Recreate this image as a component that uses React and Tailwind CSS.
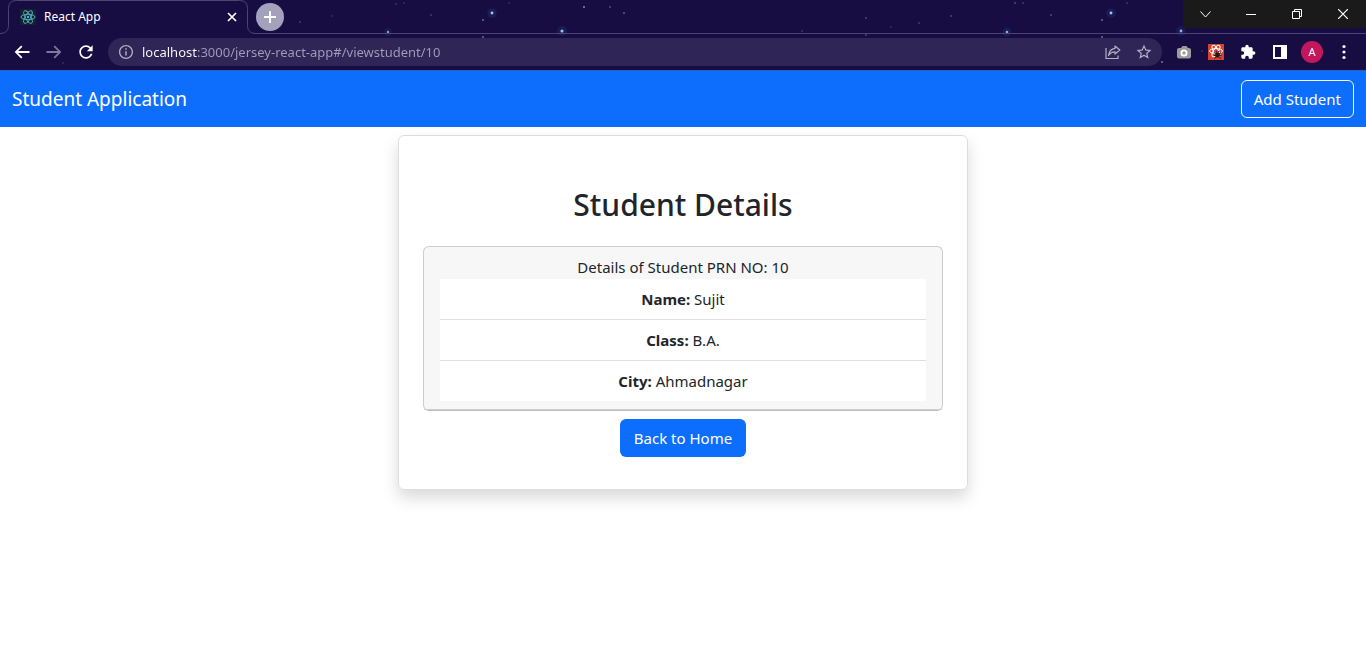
import React from "react";

const STARS = [
  [388, 32, 1.3, 0.8], [492, 13, 1.6, 1], [483, 20, 1, 0.6], [483, 37, 1, 0.6],
  [562, 31, 1.7, 1], [584, 7, 1.1, 0.7], [610, 7, 1, 0.4], [624, 13, 1, 0.5],
  [396, 4, 1, 0.25], [404, 3, 1, 0.2], [332, 16, 1, 0.2], [431, 15, 1, 0.3],
  [300, 22, 1, 0.3], [509, 3, 1, 0.2], [802, 31, 1, 0.25], [866, 18, 1, 0.35],
  [866, 35, 1, 0.35], [891, 27, 1, 0.2], [919, 23, 1, 0.3], [951, 16, 1, 0.35],
  [1007, 32, 1.5, 0.9], [1015, 3, 1, 0.4], [1023, 3, 1, 0.3], [1051, 15, 1, 0.4],
  [1111, 13, 1.6, 1], [1102, 20, 1, 0.6], [1102, 37, 1, 0.6], [1127, 3, 1, 0.25],
  [1181, 31, 1.6, 0.9], [1162, 62, 1.1, 0.6], [63, 63, 1, 0.2], [1202, 51, 1, 0.2],
];

function Icon({ d, className }) {
  return (
    <svg viewBox="0 0 24 24" className={className} fill="currentColor" aria-hidden="true">
      <path d={d} fillRule="evenodd" />
    </svg>
  );
}

const BACK = "M21 10.900H7.300l5.200-5.200L11 4.200l-7.800 7.800 7.800 7.800 1.500-1.500-5.200-5.200H21z";
const FORWARD = "M3 10.900h13.700l-5.200-5.200L13 4.200l7.800 7.800-7.800 7.800-1.500-1.500 5.200-5.200H3z";
const RELOAD =
  "M17.65 6.35C16.2 4.9 14.21 4 12 4c-4.42 0-7.99 3.58-7.99 8s3.57 8 7.99 8c3.73 0 6.84-2.55 7.73-6h-2.08c-.82 2.33-3.04 4-5.65 4-3.31 0-6-2.69-6-6s2.69-6 6-6c1.66 0 3.14.69 4.22 1.78L13 11h7V4l-2.35 2.35z";
const INFO =
  "M10.900 6.500h2.200v2.200h-2.200zm0 4.200h2.200v6.600h-2.200zM12 1.500C6.200 1.500 1.500 6.200 1.500 12S6.200 22.500 12 22.500 22.500 17.800 22.500 12 17.800 1.500 12 1.500zm0 19c-4.700 0-8.500-3.800-8.500-8.500S7.300 3.500 12 3.500s8.500 3.800 8.500 8.500-3.800 8.500-8.500 8.500z";
const STAR =
  "M22 9.24l-7.19-.62L12 2 9.19 8.63 2 9.24l5.46 4.73L5.82 21 12 17.27 18.18 21l-1.63-7.03L22 9.24zM12 15.4l-3.76 2.27 1-4.28-3.32-2.88 4.38-.38L12 6.1l1.71 4.04 4.38.38-3.32 2.88 1 4.28L12 15.4z";
const PUZZLE =
  "M20.5 11H19V7c0-1.1-.9-2-2-2h-4V3.5C13 2.12 11.88 1 10.5 1S8 2.12 8 3.5V5H4c-1.1 0-1.99.9-1.99 2v3.8H3.5c1.49 0 2.7 1.21 2.7 2.7s-1.21 2.7-2.7 2.7H2V20c0 1.1.9 2 2 2h3.8v-1.5c0-1.49 1.21-2.7 2.7-2.7 1.49 0 2.7 1.21 2.7 2.7V22H17c1.1 0 2-.9 2-2v-4h1.5c1.38 0 2.5-1.12 2.5-2.5S21.88 11 20.5 11z";

function Atom({ className, width }) {
  return (
    <svg viewBox="0 0 16 16" className={className} fill="none" stroke="currentColor" strokeWidth={width} aria-hidden="true">
      <ellipse cx="8" cy="8" rx="7" ry="2.7" />
      <ellipse cx="8" cy="8" rx="7" ry="2.7" transform="rotate(60 8 8)" />
      <ellipse cx="8" cy="8" rx="7" ry="2.7" transform="rotate(120 8 8)" />
      <circle cx="8" cy="8" r="1.2" fill="currentColor" stroke="none" />
    </svg>
  );
}

function StarField() {
  return (
    <svg className="pointer-events-none absolute inset-0 h-full w-full" aria-hidden="true">
      {STARS.map(([x, y, r, o], i) => (
        <g key={i} opacity={o}>
          {r > 1.2 && <circle cx={x} cy={y} r={r * 3} fill="#2f6fc0" opacity="0.15" />}
          <circle cx={x} cy={y} r={r * 0.9} fill="#a9bfe8" />
        </g>
      ))}
    </svg>
  );
}

function TabStrip() {
  return (
    <div className="relative flex h-[34px] items-start border-b border-[#4d4474]">
      <div className="relative -mb-px flex h-[34px] w-64 shrink-0 items-center pr-4 pl-5">
        <svg viewBox="0 0 256 34" className="absolute inset-0 h-full w-full" aria-hidden="true">
          <path d="M0 34V33.5C5 33.5 8.500 31 8.500 25.500V8.500Q8.500.5 16.500.5H239.500Q247.500.5 247.500 8.500V25.500C247.500 31 250.500 33.500 256 33.500V34Z" fill="#170d43" />
          <path d="M0 33.500C5 33.500 8.500 31 8.500 25.500V8.500Q8.500.5 16.500.5H239.500Q247.500.5 247.500 8.500V25.500C247.500 31 250.500 33.500 256 33.500" fill="none" stroke="#4d4474" />
        </svg>
        <span className="relative flex size-4 items-center justify-center bg-[#15212d] text-[#52b5cf]">
          <Atom className="size-4" width="0.9" />
        </span>
        <span className="relative ml-2 flex-1 text-xs text-white">React App</span>
        <button aria-label="Close tab" className="relative flex size-4 items-center justify-center text-white">
          <svg viewBox="0 0 10 10" className="size-2.5" stroke="currentColor" strokeWidth="1.700">
            <path d="M1 1l8 8M9 1L1 9" />
          </svg>
        </button>
      </div>
      <button aria-label="New tab" className="relative mt-[3px] flex size-7 items-center justify-center rounded-full bg-[#a3a1bb] text-white">
        <svg viewBox="0 0 12 12" className="size-3" stroke="currentColor" strokeWidth="2">
          <path d="M6 0v12M0 6h12" />
        </svg>
      </button>
      <div className="ml-auto flex h-7 bg-[#1a1a1a] text-white">
        <button aria-label="Search tabs" className="flex w-[45px] items-center justify-center">
          <svg viewBox="0 0 11 7" className="h-[7px] w-[11px]" fill="none" stroke="currentColor"><path d="M.5.5l5 5.500 5-5.500" /></svg>
        </button>
        <button aria-label="Minimize" className="flex w-[46px] items-center justify-center">
          <svg viewBox="0 0 10 10" className="size-2.5" stroke="currentColor"><path d="M0 5.500h10" /></svg>
        </button>
        <button aria-label="Restore" className="flex w-[46px] items-center justify-center">
          <svg viewBox="0 0 10 10" className="size-2.5" fill="none" stroke="currentColor">
            <path d="M.5 2.500h7v7h-7zM2.500 2.500v-2h7v7h-2" />
          </svg>
        </button>
        <button aria-label="Close" className="flex w-[46px] items-center justify-center">
          <svg viewBox="0 0 10 10" className="size-2.5" stroke="currentColor" strokeWidth="1.200"><path d="M0 0l10 10M10 0L0 10" /></svg>
        </button>
      </div>
    </div>
  );
}

function Toolbar() {
  return (
    <div className="relative flex h-9 items-center pr-[13px] pl-3 text-white">
      <div className="flex gap-3">
        <button aria-label="Back"><Icon d={BACK} className="size-5" /></button>
        <button aria-label="Forward" className="text-[#7f799b]"><Icon d={FORWARD} className="size-5" /></button>
        <button aria-label="Reload"><Icon d={RELOAD} className="size-5" /></button>
      </div>
      <div className="ml-3 flex h-7 flex-1 items-center rounded-full bg-[#2f2657] pr-[9px] pl-2.5 text-[#b3afc6]">
        <Icon d={INFO} className="size-4" />
        <input
          aria-label="Address"
          defaultValue="localhost:3000/jersey-react-app#/viewstudent/10"
          className="ml-2 h-7 min-w-0 flex-1 bg-[linear-gradient(to_right,#ffffff_55px,#a29db9_55px)] bg-clip-text text-[13px] text-transparent outline-none"
        />
        <button aria-label="Share">
          <svg viewBox="0 0 16 16" className="size-4" fill="none" stroke="currentColor" strokeWidth="1.200">
            <path d="M1 4v10.500h12v-3" />
            <path d="M10 2l4.800 4-4.800 4V7.800C7 7.800 5 9 3.500 11.500 4 7.500 6 4.800 10 4.300z" strokeLinejoin="round" />
          </svg>
        </button>
        <button aria-label="Bookmark" className="ml-3.5"><Icon d={STAR} className="size-[18px]" /></button>
      </div>
      <div className="ml-3.5 flex items-center gap-4">
        <button aria-label="Screenshot">
          <svg viewBox="0 0 16 16" className="size-4">
            <path d="M3 4H5L6.500 2h4L12 4h1q2 0 2 2v6.500q0 2-2 2h-10q-2 0-2-2V6q0-2 2-2z" fill="#9b9b9b" />
            <circle cx="8" cy="9" r="2.600" fill="none" stroke="#fff" strokeWidth="1.900" />
          </svg>
        </button>
        <button aria-label="React Developer Tools" className="bg-[#d2442f]">
          <svg viewBox="0 0 16 16" className="size-4" fill="none" stroke="#fff" strokeWidth="1">
            <ellipse cx="8" cy="7" rx="6.500" ry="2.400" />
            <ellipse cx="8" cy="7" rx="6.500" ry="2.400" transform="rotate(60 8 7)" />
            <ellipse cx="8" cy="7" rx="6.500" ry="2.400" transform="rotate(120 8 7)" />
            <ellipse cx="9.500" cy="11" rx="2.300" ry="2.800" fill="#2b1512" stroke="none" />
            <path d="M6 8.500l2 1.500M6 11.500h2M6.500 14.500l1.800-1.700M13 8.500l-2 1.500M13.300 11.500h-2M13 14.500l-2-1.700M8 7l1 1.500M11 7l-1 1.500" stroke="#2b1512" />
          </svg>
        </button>
        <button aria-label="Extensions"><Icon d={PUZZLE} className="size-4" /></button>
        <button aria-label="Side panel">
          <svg viewBox="0 0 16 16" className="size-4" fill="currentColor">
            <path d="M1 1h14v14H1zM3 3v10h6V3z" fillRule="evenodd" />
          </svg>
        </button>
      </div>
      <button aria-label="Profile" className="ml-[13px] flex size-[22px] items-center justify-center rounded-full bg-[#c2185b] text-[11px]">A</button>
      <button aria-label="Menu" className="ml-3">
        <svg viewBox="0 0 18 18" className="size-[18px]" fill="currentColor">
          <circle cx="9" cy="3.500" r="1.600" /><circle cx="9" cy="9" r="1.600" /><circle cx="9" cy="14.500" r="1.600" />
        </svg>
      </button>
    </div>
  );
}

const DETAILS = [
  ["Name:", "Sujit"],
  ["Class:", "B.A."],
  ["City:", "Ahmadnagar"],
];

export default function App() {
  return (
    <div className="min-h-screen bg-white font-['Noto_Sans','Open_Sans',sans-serif] text-[#212529]">
      <header className="relative border-b border-[#2463c8] bg-[#170d43]">
        <StarField />
        <TabStrip />
        <Toolbar />
      </header>
      <nav className="flex h-14 items-center justify-between bg-[#0d6efd] px-3 text-white">
        <a href="#/" className="text-[19px] leading-[30px]">Student Application</a>
        <a href="#/addstudent" className="rounded-md border border-[#f8f9fa] px-3 py-1.5 text-[15px] leading-6">Add Student</a>
      </nav>
      <main className="mx-auto max-w-[1140px]">
        <section className="mx-auto mt-2 w-1/2 rounded-md border border-[#dddddd] px-6 pt-12 pb-8 text-center text-[15px] leading-6 shadow-[0_8px_16px_rgba(0,0,0,0.15)]">
          <h2 className="text-[30px] leading-[42px] font-medium">Student Details</h2>
          <div className="mt-5 rounded-md border border-[#cccccc] border-b-[#bbbbbb] bg-[#f7f7f7]">
            <div className="border-b border-[#d0d0d0] px-4 py-2">
              Details of Student PRN NO: 10
              <ul className="divide-y divide-[#dfdfdf] bg-white">
                {DETAILS.map(([label, value]) => (
                  <li key={label} className="py-2">
                    <b>{label}</b> {value}
                  </li>
                ))}
              </ul>
            </div>
          </div>
          <a href="#/" className="mt-2 inline-block rounded-md bg-[#0d6efd] px-3.5 py-[7px] text-white">Back to Home</a>
        </section>
      </main>
    </div>
  );
}
